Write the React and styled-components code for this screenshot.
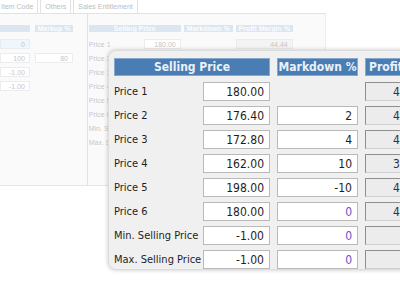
import React from 'react';
import styled, { createGlobalStyle } from 'styled-components';

const GlobalStyle = createGlobalStyle`
  html, body {
    margin: 0;
    padding: 0;
    background: #fff;
  }
  body {
    font-family: "DejaVu Sans Condensed", "Liberation Sans", Arial, sans-serif;
  }
`;

const Stage = styled.div`
  position: relative;
  width: 400px;
  height: 284px;
  overflow: hidden;
  background: #fff;
`;

/* faded window behind the zoomed panel */
const Backdrop = styled.div`
  width: 326px;
  font-family: "Liberation Sans", Arial, sans-serif;
  font-size: 7px;
  color: #c4c4c4;
`;

const TabStrip = styled.div`
  display: flex;
  gap: 2px;
  height: 14px;
  margin-left: -4px;
  border-bottom: 1px solid #e2e2e2;
  box-sizing: border-box;
`;

const Tab = styled.div`
  display: flex;
  align-items: center;
  padding: 0 4px;
  border: 1px solid #e2e2e2;
  border-bottom: none;
  border-top: none;
  color: #bdbdbd;
`;

const Sheet = styled.div`
  display: flex;
  height: 172px;
  background: #fafafa;
  border-bottom: 1px solid #e6e6e6;
  border-right: 1px solid #ececec;
  box-sizing: border-box;
`;

const Section = styled.div`
  display: grid;
  grid-template-columns: ${(p) => p.$cols};
  grid-auto-rows: 10px;
  column-gap: ${(p) => p.$gap}px;
  row-gap: 4px;
  align-content: start;
  width: ${(p) => p.$width}px;
  padding: 11px 0 0 ${(p) => p.$left}px;
  box-sizing: border-box;
  border-right: ${(p) => (p.$divider ? '1px solid #e2e2e2' : 'none')};
`;

const FadedHead = styled.div`
  grid-column: span ${(p) => p.$span || 1};
  display: flex;
  align-items: center;
  justify-content: center;
  background: #dbe6f0;
  color: #fbfdff;
  font-weight: bold;
  margin-bottom: 3px;
  white-space: nowrap;
  overflow: hidden;
`;

const FadedLabel = styled.div`
  grid-column: 1;
  display: flex;
  align-items: center;
  color: #c8c8c8;
  white-space: nowrap;
  overflow: hidden;
`;

const FadedBox = styled.div`
  grid-column: ${(p) => p.$col || 'auto'};
  display: flex;
  align-items: center;
  justify-content: flex-end;
  padding-right: 4px;
  border: 1px solid #ececec;
  background: ${(p) => (p.$tint ? '#eef7fb' : p.$grey ? '#f4f4f4' : '#fff')};
  color: #c6c6c6;
`;

/* zoomed panel on top */
const Lens = styled.div`
  position: absolute;
  left: 108px;
  top: 50px;
  width: 330px;
  height: 220px;
  padding: 7px 0 0 5px;
  box-sizing: border-box;
  background: #f0f0f0;
  border: 1px solid #dcdcdc;
  border-radius: 8px;
  box-shadow: 0 0 4px rgba(0, 0, 0, 0.22);
  font-size: 11.5px;
  color: #1a1a1a;
`;

const PriceGrid = styled.div`
  display: grid;
  grid-template-columns: 82px 67px 81px 65px;
  grid-auto-rows: 19px;
  column-gap: 7px;
  row-gap: 5px;
`;

const HeadCell = styled.div`
  grid-column: span ${(p) => p.$span || 1};
  height: 18px;
  margin-bottom: -1px;
  display: flex;
  align-items: center;
  justify-content: ${(p) => (p.$start ? 'flex-start' : 'center')};
  padding-left: ${(p) => (p.$start ? '3px' : '0')};
  box-sizing: border-box;
  background: #4a7db3;
  border: 1px solid #86a8cb;
  color: #eaf1f8;
  font-weight: bold;
  font-size: 12px;
  white-space: nowrap;
  overflow: hidden;
`;

const RowLabel = styled.div`
  display: flex;
  align-items: center;
  white-space: nowrap;
  font-size: 11px;
  color: #1e1e1e;
`;

const Field = styled.div`
  grid-column: ${(p) => p.$col || 'auto'};
  display: flex;
  align-items: center;
  justify-content: flex-end;
  padding-right: 5px;
  box-sizing: border-box;
  background: #fff;
  border: 1px solid #b9b9b9;
  color: ${(p) => (p.$soft ? '#6a52c4' : '#1e1e1e')};
  font-size: 12px;
`;

const Locked = styled(Field)`
  background: #ececec;
  border-color: #8e8e8e #cfcfcf #cfcfcf #8e8e8e;
  color: #333;
`;

const rows = [
  { label: 'Price 1', sell: '180.00', markdown: null, margin: '44.44' },
  { label: 'Price 2', sell: '176.40', markdown: '2', margin: '43.31' },
  { label: 'Price 3', sell: '172.80', markdown: '4', margin: '42.13' },
  { label: 'Price 4', sell: '162.00', markdown: '10', margin: '38.27' },
  { label: 'Price 5', sell: '198.00', markdown: '-10', margin: '49.49' },
  { label: 'Price 6', sell: '180.00', markdown: '0', margin: '44.44', soft: true },
  { label: 'Min. Selling Price', sell: '-1.00', markdown: '0', margin: '', soft: true },
  { label: 'Max. Selling Price', sell: '-1.00', markdown: '0', margin: '', soft: true },
];

const fadedLabels = ['Price 1', 'Price 2', 'Price 3', 'Price 4', 'Price 5', 'Price 6', 'Min. Selling Price', 'Max. Selling Price'];

const App = () => {
  return (
    <>
      <GlobalStyle />
      <Stage>
        <Backdrop>
          <TabStrip>
            <Tab>Item Code</Tab>
            <Tab>Others</Tab>
            <Tab>Sales Entitlement</Tab>
          </TabStrip>
          <Sheet>
            <Section $cols="30px 38px" $gap={5} $width={88} $left={0} $divider>
              <FadedHead />
              <FadedHead>Markup %</FadedHead>
              <FadedBox $tint>0</FadedBox>
              <div />
              <FadedBox>100</FadedBox>
              <FadedBox>80</FadedBox>
              <FadedBox>-1.00</FadedBox>
              <div />
              <FadedBox>-1.00</FadedBox>
            </Section>
            <Section $cols="52px 37px 49px 57px" $gap={3} $width={238} $left={1}>
              <FadedHead $span={2}>Selling Price</FadedHead>
              <FadedHead>Markdown %</FadedHead>
              <FadedHead>Profit Margin %</FadedHead>
              {fadedLabels.map((l, i) => (
                <React.Fragment key={l}>
                  <FadedLabel>{l}</FadedLabel>
                  {i === 0 && (
                    <>
                      <FadedBox>180.00</FadedBox>
                      <FadedBox $col={4} $grey>44.44</FadedBox>
                    </>
                  )}
                </React.Fragment>
              ))}
            </Section>
          </Sheet>
        </Backdrop>

        <Lens>
          <PriceGrid>
            <HeadCell $span={2}>Selling Price</HeadCell>
            <HeadCell>Markdown %</HeadCell>
            <HeadCell $start>Profit Margin %</HeadCell>
            {rows.map((r) => (
              <React.Fragment key={r.label}>
                <RowLabel>{r.label}</RowLabel>
                <Field>{r.sell}</Field>
                {r.markdown === null ? (
                  <div />
                ) : (
                  <Field $soft={r.soft && r.markdown === '0'}>{r.markdown}</Field>
                )}
                <Locked>{r.margin}</Locked>
              </React.Fragment>
            ))}
          </PriceGrid>
        </Lens>
      </Stage>
    </>
  );
};

export default App;
